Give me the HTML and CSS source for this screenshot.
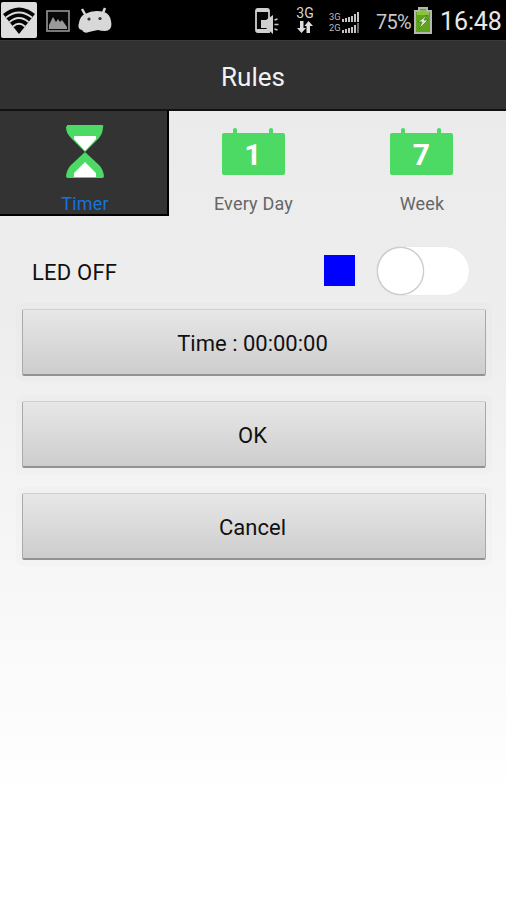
FILE: index.html
```html
<!DOCTYPE html>
<html lang="en">
<head>
	<meta charset="UTF-8">
	<title>Rules</title>
	<link rel="stylesheet" href="styles.css">
</head>
<body>
	<div class="status">
		<svg class="wifi" width="36" height="36" viewBox="0 0 36 36">
			<rect width="36" height="36" rx="2" fill="#dedede"/>
			<path d="M2 12Q18-1 34 12L18 32Z" fill="#050505"/>
			<path d="M5 15.500Q18 5.500 31 15.500M8.500 20Q18 12 27.500 20M12 24.500Q18 19 24 24.500" fill="none" stroke="#dedede" stroke-width="1.800"/>
		</svg>
		<svg class="photo" width="24" height="22" viewBox="0 0 24 22">
			<rect x="1" y="1" width="22" height="20" fill="#080808" stroke="#8d8d8d" stroke-width="1.700"/>
			<path d="M3 19V15L7 7L10 12L12 9L14 12L16 10L21 17V19Z" fill="#999"/>
		</svg>
		<svg class="droid" width="34" height="27" viewBox="0 0 34 27">
			<path d="M4 2L8 9M27 1L24 8" stroke="#d8d8d8" stroke-width="2.500"/>
			<path d="M7 7Q16 2 26 5Q32 7 33 14Q35 24 27 24Q23 24 20 23Q15 24 11 25Q6 27 4 23Q-1 22 1 16Q2 9 7 7Z" fill="#d8d8d8"/>
			<circle cx="11" cy="12" r="1.600" fill="#333"/>
			<circle cx="22" cy="11.500" r="1.600" fill="#333"/>
		</svg>
		<svg class="phone" width="24" height="26" viewBox="0 0 24 26">
			<path d="M1 3Q1 1 3 1H12Q14 1 14 3V24H3Q1 24 1 22Z" fill="#050505" stroke="#d0d0d0" stroke-width="1.800"/>
			<path d="M1 2H14V4H1ZM1 21H13V24H1Z" fill="#d0d0d0"/>
			<path d="M6 12H11L18 7V26L11 20H6Z" fill="#d0d0d0"/>
			<path d="M19.500 12L22.500 11M19.500 16.500H23.500M19.500 21L22.500 22" stroke="#c4c4c4" stroke-width="1.700"/>
		</svg>
		<div class="net">
			<span>3G</span>
			<svg width="16" height="12" viewBox="0 0 16 12">
				<path d="M3 0H6.500V7H9L4.500 12L0 7H3ZM11.500 0L16 5H13V12H9.500V5H7.500Z" fill="#ddd"/>
			</svg>
		</div>
		<div class="signals">
			<div class="signal">
				<span>3G</span>
				<svg width="17" height="10" viewBox="0 0 17 10"><path d="M0 7H2V10H0ZM3 6H5V10H3ZM6 5H8V10H6ZM9 4H11V10H9ZM12 2H14V10H12ZM15 0H17V10H15Z" fill="#c4c4c4"/></svg>
			</div>
			<div class="signal">
				<span>2G</span>
				<svg width="17" height="10" viewBox="0 0 17 10"><path d="M0 7H2V10H0ZM3 6H5V10H3ZM6 5H8V10H6ZM9 4H11V10H9ZM12 2H14V10H12Z" fill="#c4c4c4"/><path d="M15 0H17V10H15Z" fill="#666"/></svg>
			</div>
		</div>
		<span class="percent">75%</span>
		<svg class="battery" width="18" height="27" viewBox="0 0 18 27">
			<path d="M5 1H13V4H17V26H1V4H5Z" fill="#5ea51b" stroke="#b5b5b5" stroke-width="2"/>
			<path d="M6 3H12V5H15V8H3V5H6Z" fill="#8ac43f"/>
			<path d="M13 8L4 15H8L5 22L14 13H10Z" fill="#d9e9c8" stroke="#365f16" stroke-width=".6"/>
		</svg>
		<span class="clock">16:48</span>
	</div>
	<div class="title">Rules</div>
	<ul class="tabs">
		<li class="tab active">
			<svg width="64" height="56" viewBox="0 0 64 56">
				<path d="M14 1Q13 0 15 0H49Q51 0 50 2Q50 8 46 13L32 27L46 40Q50 44 51 51Q51 53 49 53H15Q13 53 13 51Q14 44 18 40L32 27L18 13Q13 8 13 2Z" fill="#4cd964"/>
				<path d="M21 11H43V14L32 26L21 14ZM32 37L43 48V52H21V48Z" fill="#fff"/>
			</svg>
			<span>Timer</span>
		</li>
		<li class="tab">
			<div class="cal">1</div>
			<span>Every Day</span>
		</li>
		<li class="tab">
			<div class="cal">7</div>
			<span>Week</span>
		</li>
	</ul>
	<div class="led">
		<span>LED OFF</span>
		<i class="color"></i>
		<div class="switch"><i class="knob"></i></div>
	</div>
	<div class="btns">
		<button>Time : 00:00:00</button>
		<button>OK</button>
		<button>Cancel</button>
	</div>
</body>
</html>
```
FILE: styles.css
```css
body,ul,li,button{
	margin:0;
	padding:0;
}
ul{
	list-style-type: none;
}
svg{
	display: block;
	flex-shrink: 0;
}
body{
	height: 900px;
	overflow: hidden;
	font:22px/26px Roboto,sans-serif;
	color:#111;
	background: linear-gradient(#ebebeb 111px,#eee 340px,#f5f5f5 520px,#fff 800px);
}
.status{
	display: flex;
	height: 40px;
	background: #000;
	color:#d5d5d5;
}
.wifi{
	margin:2px 0 0 1px;
}
.photo{
	margin:10px 0 0 9px;
}
.droid{
	margin:7px 0 0 8px;
}
.phone{
	margin:8px 0 0 143px;
}
.net{
	display: flex;
	flex-direction: column;
	align-items: center;
	width: 20px;
	margin:7px 0 0 16px;
	font-size: 14px;
	line-height: 13px;
}
.net svg{
	margin-top: 1px;
}
.signals{
	margin:11px 0 0 14px;
}
.signal{
	display: flex;
	align-items: center;
	height: 11px;
	font-size: 9.300px;
	line-height: 11px;
	color:#bbb;
}
.signal span{
	width: 13px;
}
.percent{
	width: 36px;
	margin:9px 0 0 17px;
	font-size: 20px;
	letter-spacing: -.8px;
	color:#c8c8c8;
}
.battery{
	margin:7px 0 0 2px;
}
.clock{
	margin:9px 0 0 8px;
	font-size: 25px;
	letter-spacing: -.1px;
	color:#e8e8e8;
}
.title{
	box-sizing: border-box;
	height: 71px;
	border-top: 1px solid #3b3b3b;
	border-bottom: 2px solid #111;
	background: #313131;
	color:#f2f2f2;
	font-size: 26px;
	line-height: 72px;
	text-align: center;
}
.tabs{
	display: grid;
	grid-template-columns: 169px 168px 169px;
	height: 104px;
}
.tab{
	display: flex;
	flex-direction: column;
	align-items: center;
	color:#666;
	font-size: 18px;
	letter-spacing: .2px;
	line-height: 20px;
	padding-top: 14px;
}
.tab span{
	margin-top: 13px;
}
.active{
	box-sizing: border-box;
	padding-left: 2px;
	border-right: 2px solid #000;
	border-bottom: 2px solid #000;
	background: #333;
	color:#1673dc;
}
.cal{
	position: relative;
	width: 63px;
	height: 42px;
	margin:8px 0 6px;
	border-radius: 2px;
	background: #4cd964;
	color:#fff;
	font-size: 30px;
	font-weight: 700;
	line-height: 43px;
	text-align: center;
}
.cal:before,.cal:after{
	content:"";
	position: absolute;
	top:-5px;
	left: 11px;
	width: 4px;
	height: 6px;
	border-radius: 2px 2px 0 0;
	background: #4cd964;
}
.cal:after{
	left: 47px;
}
.tab span{
	padding-left: 1px;
}
.led{
	display: flex;
	align-items: center;
	height: 94px;
	padding:17px 37px 0 32px;
	box-sizing: border-box;
}
.led span{
	flex:1;
	padding-top: 4px;
	letter-spacing: .2px;
}
.color{
	width: 31px;
	height: 31px;
	margin-right: 22px;
	margin-bottom: 1px;
	background: #00f;
}
.switch{
	width: 92px;
	height: 48px;
	border-radius: 24px;
	background: #fff;
	box-shadow: 0 0 1px #ddd;
}
.knob{
	display: block;
	box-sizing: border-box;
	width: 47px;
	height: 48px;
	border:1px solid #ccc;
	border-radius: 50%;
	background: #fff;
	box-shadow: 0 0 1px #aaa;
}
.btns{
	display: flex;
	flex-direction: column;
	gap:25px;
	padding:0 20px 0 22px;
}
.btns button{
	height: 67px;
	padding:4px 3px 0 0;
	border:1px solid;
	border-color:#cfcfcf #a8a8a8 #929292 #aaa;
	border-bottom-width: 2px;
	border-radius: 2px;
	background: linear-gradient(#e7e7e7,#cdcdcd);
	box-shadow: 0 0 0 6px rgba(0,0,0,.012);
	color:#111;
	font:22px/26px Roboto,sans-serif;
}
```
